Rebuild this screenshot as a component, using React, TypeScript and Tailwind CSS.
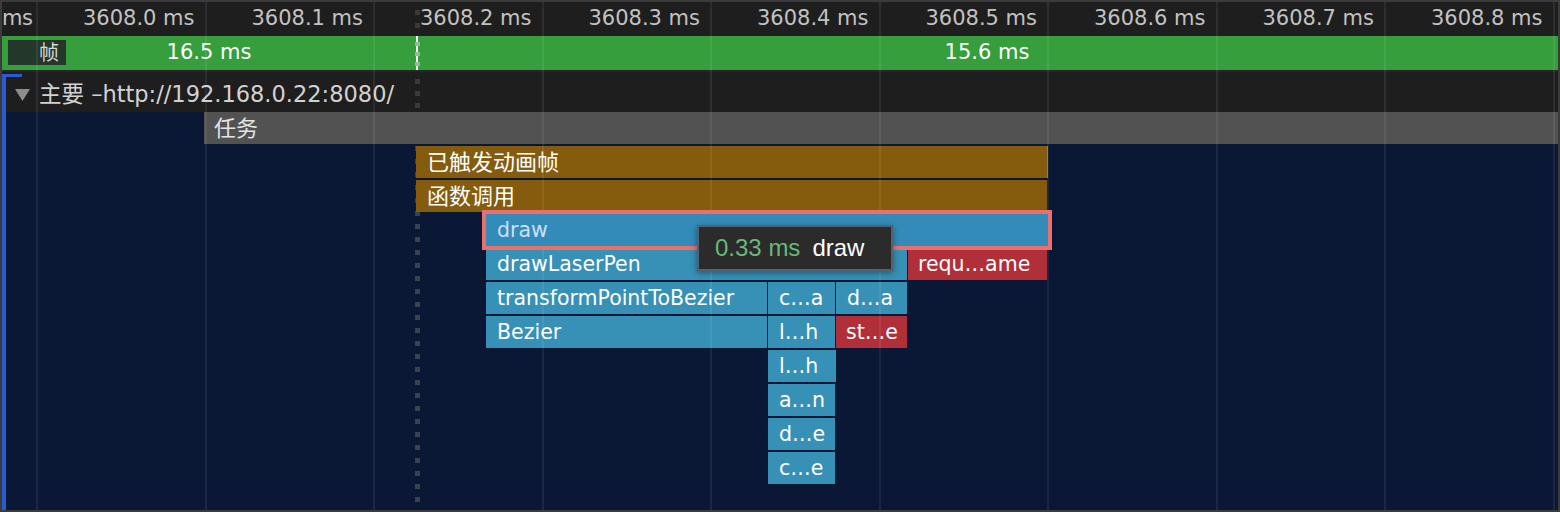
type Tone = 'task' | 'gold' | 'blue' | 'red' | 'draw' | 'orange' | 'purple';

type Bar = {
  row: number;
  x0: number;
  x1: number;
  label?: string;
  tone: Tone;
};

const tones: Record<Tone, string> = {
  task: 'pl-[10px] bg-[#525252] text-[22px] text-[#e4e4e4]',
  gold: 'pl-[11px] bg-[#855c0e] text-[22px] text-white',
  blue: 'pl-[11px] bg-[#3790b6] text-[20.5px] text-white',
  red: 'pl-[10px] bg-[#b12f38] text-[20.5px] text-white',
  draw: 'z-10 pl-[11px] bg-[#338bba] text-[20.5px] text-[#cddff3] shadow-[0_0_0_4px_#e8716e]',
  orange: 'bg-[#b8741a]',
  purple: 'bg-[#7c5cf0]',
};

// page x coordinates, taken from the recording
const bars: Bar[] = [
  { row: 0, x0: 204, x1: 1558, label: '任务', tone: 'task' },
  { row: 1, x0: 416, x1: 1047, label: '已触发动画帧', tone: 'gold' },
  { row: 1, x0: 1047, x1: 1048, tone: 'purple' },
  { row: 2, x0: 416, x1: 1047, label: '函数调用', tone: 'gold' },
  { row: 3, x0: 486, x1: 1048, label: 'draw', tone: 'draw' },
  { row: 4, x0: 486, x1: 907, label: 'drawLaserPen', tone: 'blue' },
  { row: 4, x0: 908, x1: 1047, label: 'requ…ame', tone: 'red' },
  { row: 5, x0: 486, x1: 767, label: 'transformPointToBezier', tone: 'blue' },
  { row: 5, x0: 768, x1: 835, label: 'c…a', tone: 'blue' },
  { row: 5, x0: 836, x1: 907, label: 'd…a', tone: 'blue' },
  { row: 6, x0: 486, x1: 767, label: 'Bezier', tone: 'blue' },
  { row: 6, x0: 768, x1: 835, label: 'l…h', tone: 'blue' },
  { row: 6, x0: 836, x1: 907, label: 'st…e', tone: 'red' },
  { row: 7, x0: 768, x1: 835, label: 'l…h', tone: 'blue' },
  { row: 7, x0: 835, x1: 836, tone: 'orange' },
  { row: 8, x0: 768, x1: 835, label: 'a…n', tone: 'blue' },
  { row: 9, x0: 768, x1: 835, label: 'd…e', tone: 'blue' },
  { row: 10, x0: 768, x1: 835, label: 'c…e', tone: 'blue' },
];

const ticks = [
  '3608.0 ms',
  '3608.1 ms',
  '3608.2 ms',
  '3608.3 ms',
  '3608.4 ms',
  '3608.5 ms',
  '3608.6 ms',
  '3608.7 ms',
  '3608.8 ms',
];

const rows = Array.from({ length: 11 }, (_, i) => i);

function Marker({ dash }: { dash: string }) {
  return (
    <div
      className={`pointer-events-none absolute top-0 bottom-0 left-[413px] w-[5px] ${dash}`}
    />
  );
}

export default function App() {
  return (
    <div className="h-[512px] w-[1560px] bg-[#3b3b3b] p-[2px] font-['DejaVu_Sans','Noto_Sans_CJK_SC',sans-serif]">
      <div className="relative flex h-full w-full flex-col overflow-hidden bg-[#0a1836]">
        {/* ruler */}
        <div className="relative h-[34px] shrink-0 overflow-hidden bg-[#1e1e1e]">
          <Marker dash="bg-[repeating-linear-gradient(to_bottom,transparent_0_8px,#3a3a3a_8px_13px)]" />
          <div className="flex h-full items-center pb-[1px] text-[21px] whitespace-nowrap text-[#c2c2c2]">
            {/* previous tick scrolled off, only its unit shows */}
            <div className="w-[34px] shrink-0 tracking-[-0.5px]">ms</div>
            {ticks.map((t) => (
              <div key={t} className="w-[168.5px] shrink-0 pr-[10px] text-right">
                {t}
              </div>
            ))}
          </div>
        </div>

        {/* frames */}
        <div className="relative flex h-[34px] shrink-0 bg-[#369e3c] text-[21px] text-white">
          <div className="absolute top-[4px] left-[6px] flex h-[25px] w-[58px] items-center bg-[#23372a] pl-[31px] text-[20px] text-[#d8d8d8]">
            帧
          </div>
          <div className="flex w-[414px] shrink-0 items-center justify-center">16.5 ms</div>
          <div className="w-[2px] shrink-0 bg-white" />
          <div className="flex flex-1 items-center justify-center pr-[2px]">15.6 ms</div>
          <Marker dash="bg-[repeating-linear-gradient(to_bottom,transparent_0_6px,#8fc093_6px_10px)]" />
        </div>
        <div className="h-[2px] shrink-0 bg-[#262626]" />

        {/* track header */}
        <div className="relative flex h-[40px] shrink-0 items-center gap-[9px] bg-[#1e1e1e] pt-[6px] pl-[13px] text-[22.5px] text-[#d2d2d2]">
          <Marker dash="bg-[repeating-linear-gradient(to_bottom,transparent_0_7px,#3a3a3a_7px_12px)]" />
          <svg width="15" height="12" viewBox="0 0 15 12">
            <polygon points="0,0 15,0 7.5,12" fill="#8c8c8c" />
          </svg>
          <span className="whitespace-nowrap">主要 –http://192.168.0.22:8080/</span>
        </div>

        {/* flame chart */}
        <div className="relative flex-1">
          <Marker dash="bg-[repeating-linear-gradient(to_bottom,transparent_0_8px,#3a4252_8px_13px)]" />
          {rows.map((r) => (
            <div key={r} className="relative h-[34px]">
              {bars
                .filter((b) => b.row === r)
                .map((b) => (
                  <div
                    key={b.x0}
                    className={`absolute top-0 flex h-[32px] items-center overflow-hidden whitespace-nowrap ${tones[b.tone]}`}
                    style={{ left: b.x0 - 2, width: b.x1 - b.x0 }}
                  >
                    {b.label}
                  </div>
                ))}
            </div>
          ))}
        </div>

        {/* track bracket */}
        <div className="pointer-events-none absolute top-[72px] bottom-0 left-0 w-[4px] bg-[#2b5bd3]" />
        <div className="pointer-events-none absolute top-[72px] left-0 h-[3px] w-[20px] bg-[#2b5bd3]" />

        {/* grid lines */}
        <div className="pointer-events-none absolute inset-0 flex pl-[34px]">
          {['ms', ...ticks].map((t) => (
            <div key={t} className="h-full w-[168.5px] shrink-0 border-l-2 border-white/[0.07]" />
          ))}
        </div>

        {/* tooltip */}
        <div className="absolute top-[223px] left-[695px] z-20 flex h-[46px] w-[196px] items-center gap-[12px] border-2 border-[#4f6372] bg-[#2b2b2b] pl-[16px] font-['Liberation_Sans',sans-serif] text-[24px] shadow-[0_2px_6px_rgba(0,0,0,0.4)]">
          <span className="text-[#69b87c]">0.33 ms</span>
          <span className="text-white">draw</span>
        </div>
      </div>
    </div>
  );
}
